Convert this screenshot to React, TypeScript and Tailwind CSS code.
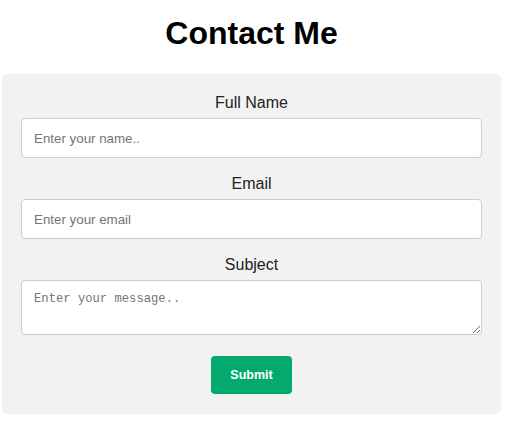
export default function App() {
  return (
    <div className="min-h-[444px] bg-white font-['Liberation_Sans',Arial,sans-serif] text-black">
      <div className="ml-[2px] w-[499px]">
        <h1 className="pt-[15px] text-center text-[32px] font-bold leading-[37px]">Contact Me</h1>

        <form
          className="mt-[22px] flex w-full flex-col rounded-[5px] bg-[#f2f2f2] px-[19px] pt-[20px] pb-[20px]"
          onSubmit={(e) => e.preventDefault()}
        >
          <label htmlFor="fname" className="mb-[6px] block text-center text-[16px] leading-[18px] text-[#222]">
            Full Name
          </label>
          <input
            id="fname"
            type="text"
            placeholder="Enter your name.."
            className="mb-[17px] h-[40px] w-full rounded-[4px] border border-[#ccc] bg-white px-[12px] text-[13.33px] outline-none placeholder:text-[#757575]"
          />

          <label htmlFor="email" className="mb-[6px] block text-center text-[16px] leading-[18px] text-[#222]">
            Email
          </label>
          <input
            id="email"
            type="email"
            placeholder="Enter your email"
            className="mb-[17px] h-[40px] w-full rounded-[4px] border border-[#ccc] bg-white px-[12px] text-[13.33px] outline-none placeholder:text-[#757575]"
          />

          <label htmlFor="subject" className="mb-[6px] block text-center text-[16px] leading-[18px] text-[#222]">
            Subject
          </label>
          <textarea
            id="subject"
            placeholder="Enter your message.."
            className="mb-[21px] block h-[55px] w-full resize-y rounded-[4px] border border-[#ccc] bg-white px-[12px] pt-[11px] font-['Liberation_Mono',monospace] text-[12.2px] leading-[15px] outline-none placeholder:text-[#757575]"
          />

          <div className="flex justify-center">
            <button
              type="submit"
              className="h-[38px] w-[81px] rounded-[4px] bg-[#04aa6d] text-[12.5px] font-bold text-white"
            >
              Submit
            </button>
          </div>
        </form>
      </div>
    </div>
  );
}
